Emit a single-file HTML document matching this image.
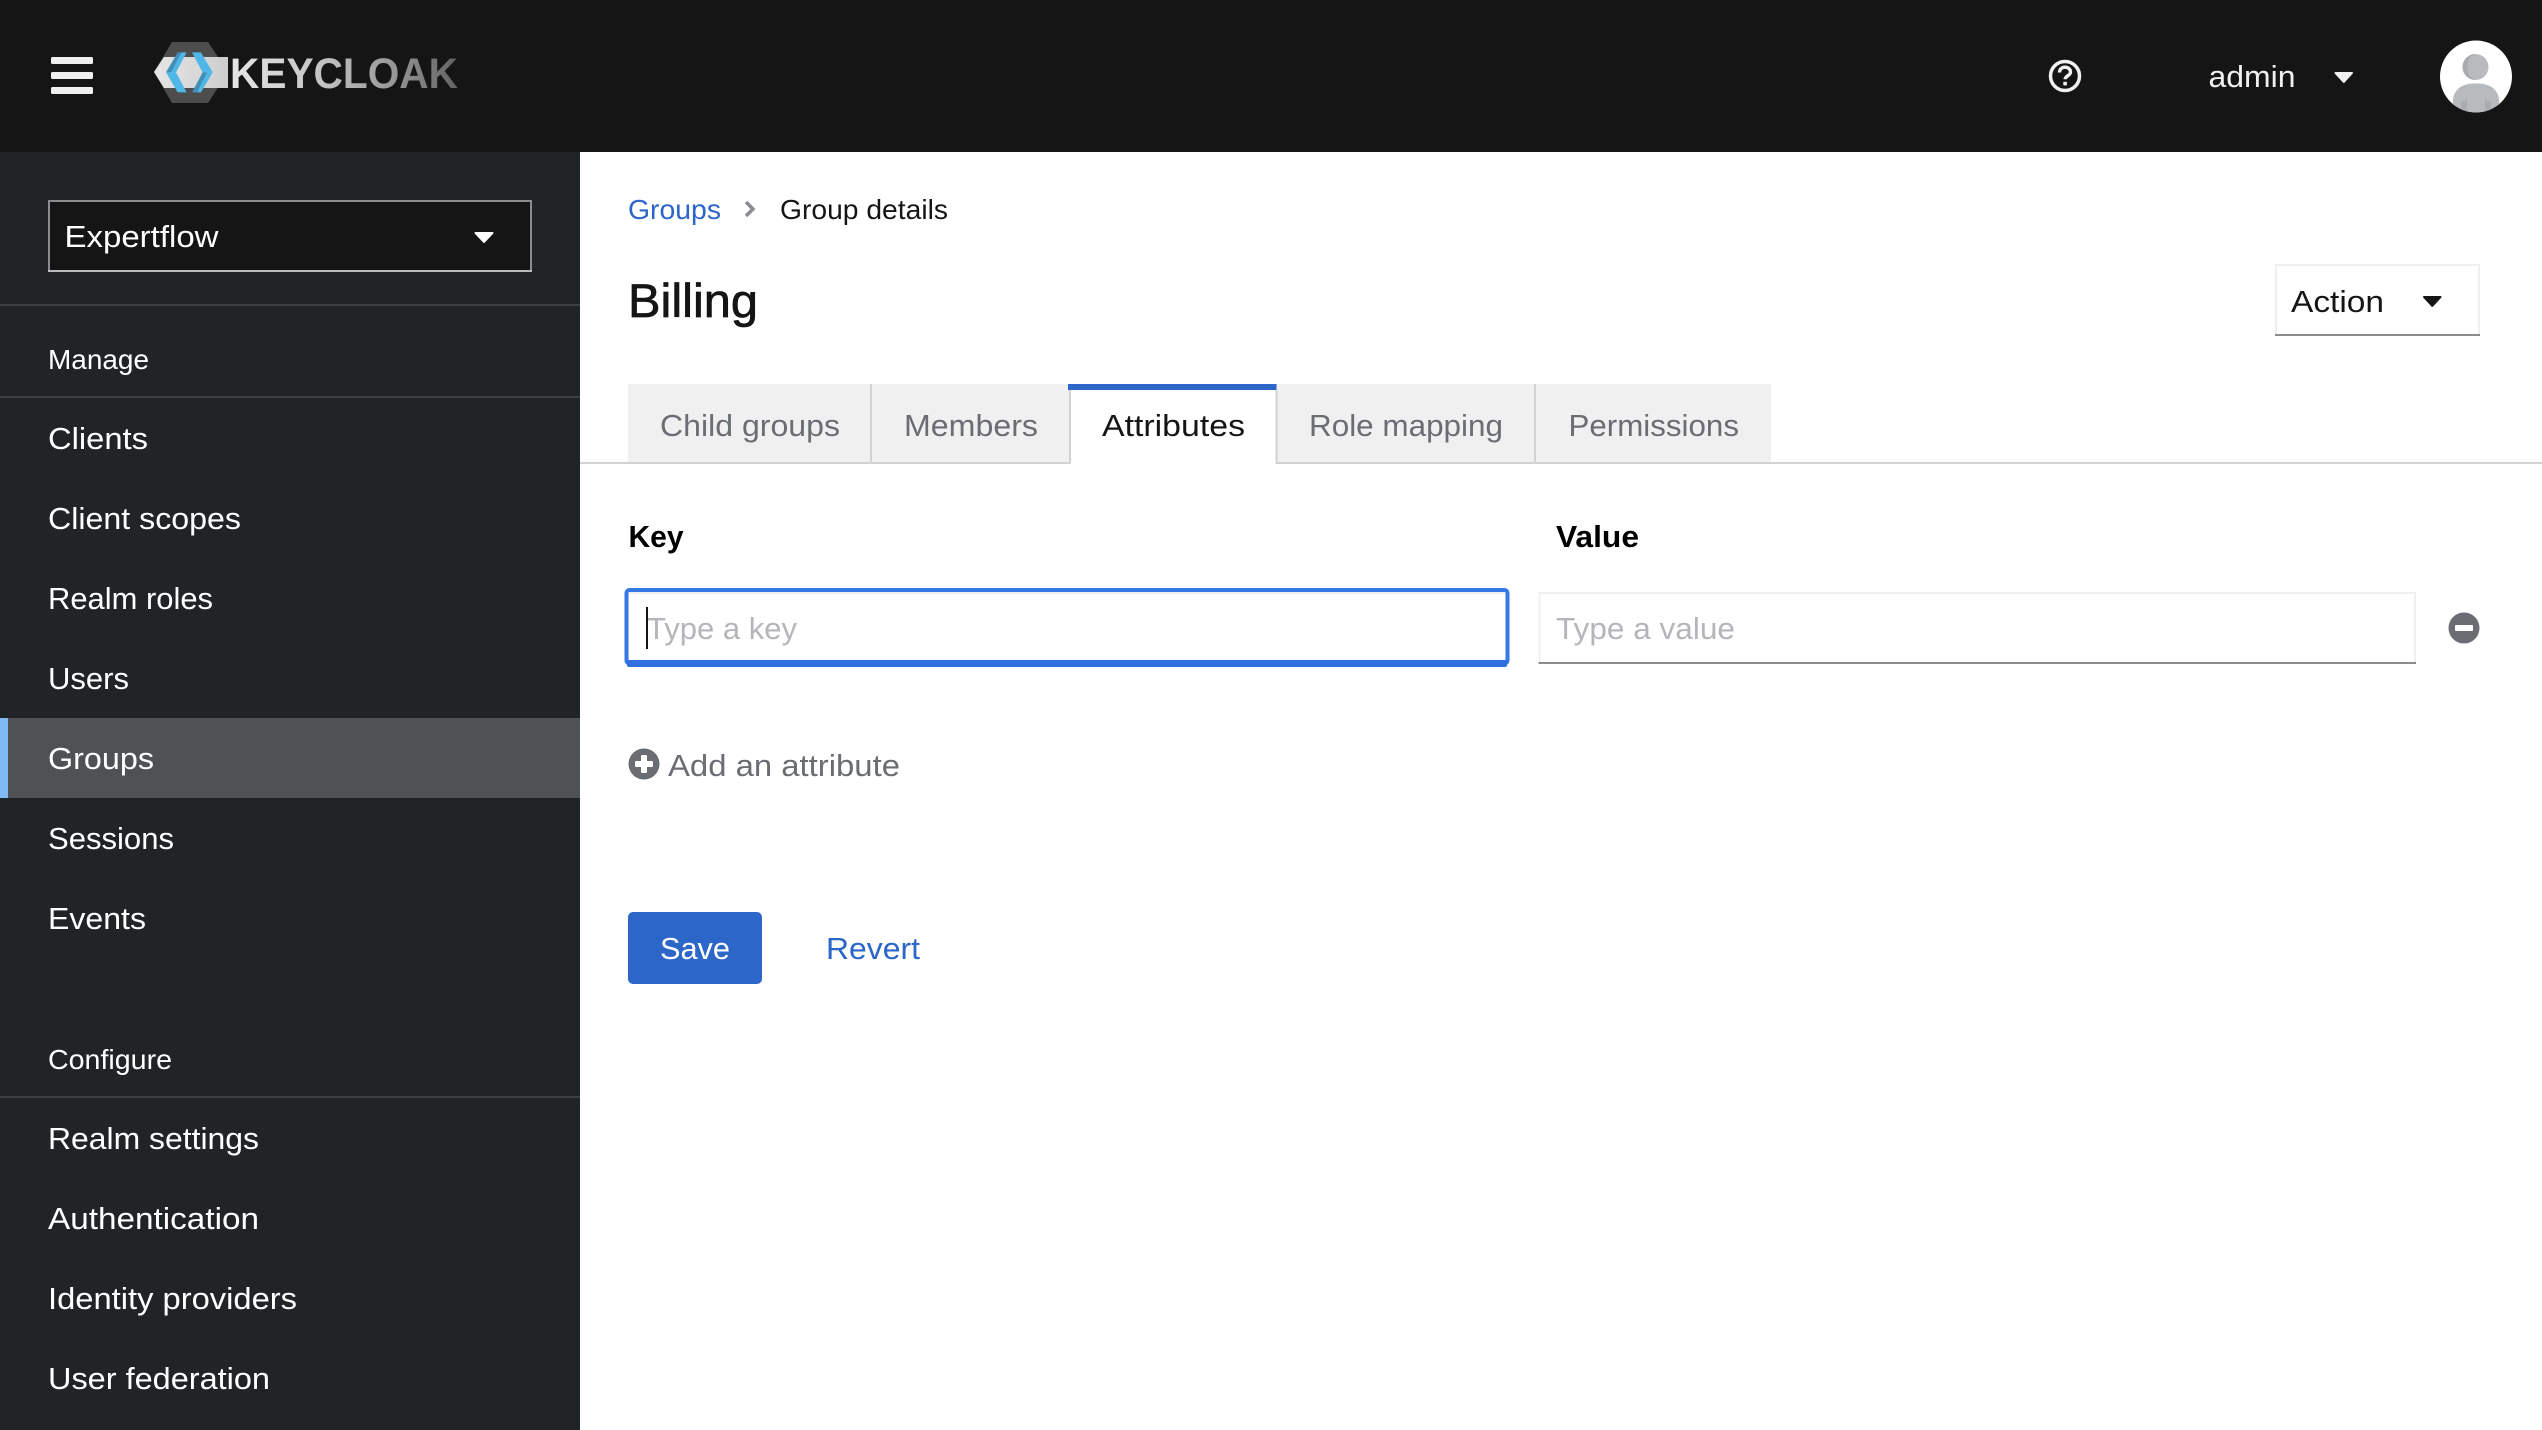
<!DOCTYPE html>
<html lang="en">
<head>
<meta charset="utf-8">
<title>Keycloak - Group details</title>
<style>
html,body{margin:0;padding:0;background:#fff;width:2542px;height:1430px;overflow:hidden}
svg{display:block}
text{font-family:"Liberation Sans",Arial,sans-serif;font-size:31px}
.nav{fill:#fff}
.gray{fill:#6a6e73}
.ph{fill:#b4b6b9}
</style>
</head>
<body>
<svg xmlns="http://www.w3.org/2000/svg" width="2542" height="1430" viewBox="0 0 2542 1430">
<defs>
<linearGradient id="kc" gradientUnits="userSpaceOnUse" x1="231" y1="0" x2="457" y2="0">
<stop offset="0" stop-color="#e6e6e6"/><stop offset=".4" stop-color="#c4c4c4"/><stop offset=".7" stop-color="#9a9a9a"/><stop offset="1" stop-color="#636363"/>
</linearGradient>
<linearGradient id="band" gradientUnits="userSpaceOnUse" x1="154" y1="0" x2="228" y2="0">
<stop offset="0" stop-color="#e6e6e6"/><stop offset="1" stop-color="#cdcdcd"/>
</linearGradient>
<clipPath id="av"><circle cx="2476" cy="76.500" r="36"/></clipPath>
</defs>

<!-- backgrounds -->
<rect width="2542" height="1430" fill="#fff"/>
<rect width="2542" height="152" fill="#151515"/>
<rect y="152" width="580" height="1278" fill="#212427"/>

<!-- hamburger -->
<rect x="51" y="57" width="42" height="7" rx="1.500" fill="#f0f0f0"/>
<rect x="51" y="72" width="42" height="7" rx="1.500" fill="#f0f0f0"/>
<rect x="51" y="87" width="42" height="7" rx="1.500" fill="#f0f0f0"/>

<!-- logo -->
<polygon points="154,72 172,42 208,42 228,72 208,103 172,103" fill="#4d4d4d"/>
<polygon points="154,72 164,57 228,57 228,88 164,88" fill="url(#band)"/>
<g transform="translate(140,30) scale(.3333)">
<polygon points="113,67 125,67 94,127 78,127" fill="#3f8fb8"/>
<polygon points="125,67 140,67 108,127 94,127" fill="#4fb6e8"/>
<polygon points="78,127 108,127 140,187 113,187" fill="#4fb6e8"/>
<polygon points="156,67 183,67 218,127 188,127" fill="#4fb6e8"/>
<polygon points="218,127 202,127 171,187 183,187" fill="#4fb6e8"/>
<polygon points="188,127 202,127 171,187 156,187" fill="#3f8fb8"/>
</g>
<text x="230" y="88" font-weight="700" style="font-size:43px" fill="url(#kc)" textLength="228" lengthAdjust="spacingAndGlyphs">KEYCLOAK</text>

<!-- help -->
<circle cx="2065" cy="76" r="14.500" fill="none" stroke="#f0f0f0" stroke-width="3.500"/>
<path d="M2059.500 72.500c0-3.200 2.400-5.300 5.500-5.300s5.500 2 5.500 4.800c0 3.800-5.300 3.800-5.300 7.200" fill="none" stroke="#f0f0f0" stroke-width="3.400"/>
<rect x="2063.300" y="81.800" width="3.600" height="3.600" fill="#f0f0f0"/>

<!-- user -->
<text x="2208.500" y="87" fill="#f0f0f0" textLength="87" lengthAdjust="spacingAndGlyphs">admin</text>
<polygon points="2335.500,73 2352,73 2343.800,82" fill="#f0f0f0" stroke="#f0f0f0" stroke-width="2" stroke-linejoin="round"/>
<circle cx="2476" cy="76.500" r="36" fill="#fff"/>
<g clip-path="url(#av)">
<ellipse cx="2475.500" cy="67" rx="13" ry="13" fill="#b8bbbe"/>
<path d="M2462.500 67a13 13 0 0 1 13-13c-5 1.500-8 6-8 13s3 11.500 8 13a13 13 0 0 1-13-13z" fill="#a9abae"/>
<path d="M2452 114l1-14c1-11 9-16 20-16.500h6c11 .5 19 5.500 20 16.500l1 14z" fill="#b8bbbe"/>
<path d="M2461 114v-9c0-3 2-5 6-6v15zM2491 114v-9c0-3-2-5-6-6v15z" fill="#a9abae"/>
</g>

<!-- realm select -->
<rect x="49" y="201" width="482" height="70" fill="#151515" stroke="#8a8d90" stroke-width="2"/>
<line x1="48" y1="271" x2="532" y2="271" stroke="#b8bbbe" stroke-width="2"/>
<text x="64.500" y="247" fill="#fff" textLength="154" lengthAdjust="spacingAndGlyphs">Expertflow</text>
<polygon points="475.500,233 492.500,233 484,242" fill="#fff" stroke="#fff" stroke-width="2" stroke-linejoin="round"/>

<!-- nav -->
<rect y="304" width="580" height="2" fill="#3c3f42"/>
<text class="nav" x="48" y="369" style="font-size:28px" textLength="101" lengthAdjust="spacingAndGlyphs">Manage</text>
<rect y="396" width="580" height="2" fill="#3c3f42"/>
<rect y="718" width="580" height="80" fill="#4f5255"/>
<rect y="718" width="8" height="80" fill="#7fb9f2"/>
<text class="nav" x="48" y="449" textLength="100" lengthAdjust="spacingAndGlyphs">Clients</text>
<text class="nav" x="48" y="529" textLength="193" lengthAdjust="spacingAndGlyphs">Client scopes</text>
<text class="nav" x="48" y="609" textLength="165" lengthAdjust="spacingAndGlyphs">Realm roles</text>
<text class="nav" x="48" y="689" textLength="81" lengthAdjust="spacingAndGlyphs">Users</text>
<text class="nav" x="48" y="769" textLength="106" lengthAdjust="spacingAndGlyphs">Groups</text>
<text class="nav" x="48" y="849" textLength="126" lengthAdjust="spacingAndGlyphs">Sessions</text>
<text class="nav" x="48" y="929" textLength="98" lengthAdjust="spacingAndGlyphs">Events</text>
<text class="nav" x="48" y="1069" style="font-size:28px" textLength="124" lengthAdjust="spacingAndGlyphs">Configure</text>
<rect y="1096" width="580" height="2" fill="#3c3f42"/>
<text class="nav" x="48" y="1149" textLength="211" lengthAdjust="spacingAndGlyphs">Realm settings</text>
<text class="nav" x="48" y="1229" textLength="211" lengthAdjust="spacingAndGlyphs">Authentication</text>
<text class="nav" x="48" y="1309" textLength="249" lengthAdjust="spacingAndGlyphs">Identity providers</text>
<text class="nav" x="48" y="1389" textLength="222" lengthAdjust="spacingAndGlyphs">User federation</text>

<!-- breadcrumb -->
<text x="628" y="219" style="font-size:28px" fill="#2b66c8" textLength="93" lengthAdjust="spacingAndGlyphs">Groups</text>
<path d="M746 202l7 7-7 7" fill="none" stroke="#8a8d90" stroke-width="3.500"/>
<text x="780" y="219" style="font-size:28px" fill="#151515" textLength="168" lengthAdjust="spacingAndGlyphs">Group details</text>

<!-- title -->
<text x="628" y="317" style="font-size:47px" fill="#151515" stroke="#151515" stroke-width=".7" textLength="130" lengthAdjust="spacingAndGlyphs">Billing</text>

<!-- action -->
<rect x="2276" y="265" width="203" height="70" fill="#fff" stroke="#f0f0f0" stroke-width="2"/>
<line x1="2275" y1="335" x2="2480" y2="335" stroke="#8a8d90" stroke-width="2"/>
<text x="2291" y="312" fill="#151515" textLength="93" lengthAdjust="spacingAndGlyphs">Action</text>
<polygon points="2424,297 2440.500,297 2432.300,306" fill="#151515" stroke="#151515" stroke-width="2" stroke-linejoin="round"/>

<!-- tabs -->
<rect x="580" y="462" width="1962" height="2" fill="#d2d2d2"/>
<rect x="628" y="384" width="1143" height="78" fill="#f0f0f0"/>
<rect x="870" y="384" width="2" height="78" fill="#d2d2d2"/>
<rect x="1534" y="384" width="2" height="78" fill="#d2d2d2"/>
<rect x="1069" y="384" width="207" height="80" fill="#fff"/>
<rect x="1069" y="390" width="2" height="74" fill="#d2d2d2"/>
<rect x="1275.500" y="390" width="2" height="74" fill="#d2d2d2"/>
<rect x="1068" y="384" width="208.500" height="6" fill="#2b66c8"/>
<text class="gray" x="660" y="436" textLength="180" lengthAdjust="spacingAndGlyphs">Child groups</text>
<text class="gray" x="904" y="436" textLength="134" lengthAdjust="spacingAndGlyphs">Members</text>
<text x="1102" y="436" fill="#151515" textLength="143" lengthAdjust="spacingAndGlyphs">Attributes</text>
<text class="gray" x="1309" y="436" textLength="194" lengthAdjust="spacingAndGlyphs">Role mapping</text>
<text class="gray" x="1568.500" y="436" textLength="170.500" lengthAdjust="spacingAndGlyphs">Permissions</text>

<!-- labels -->
<text x="628.500" y="547" font-weight="700" fill="#000" textLength="55" lengthAdjust="spacingAndGlyphs">Key</text>
<text x="1556" y="547" font-weight="700" fill="#000" textLength="83" lengthAdjust="spacingAndGlyphs">Value</text>

<!-- key input -->
<rect x="626.500" y="590" width="881" height="73.500" rx="3" fill="#fff" stroke="#3578e8" stroke-width="4"/>
<rect x="629" y="592" width="876" height="2" fill="#f0f0f0"/>
<rect x="627" y="660" width="880" height="7" rx="2" fill="#2f6fdf"/>
<text class="ph" x="647" y="639" textLength="150" lengthAdjust="spacingAndGlyphs">Type a key</text>
<rect x="646" y="607" width="2" height="42" fill="#151515"/>

<!-- value input -->
<rect x="1539.500" y="593" width="875.500" height="70" fill="#fff" stroke="#f0f0f0" stroke-width="2"/>
<line x1="1538.500" y1="663" x2="2416" y2="663" stroke="#8a8d90" stroke-width="2"/>
<text class="ph" x="1556" y="639" textLength="179" lengthAdjust="spacingAndGlyphs">Type a value</text>

<!-- remove -->
<circle cx="2464" cy="628" r="15.500" fill="#6a6e73"/>
<rect x="2455" y="625" width="18" height="6" rx="1" fill="#fff"/>

<!-- add -->
<circle cx="644" cy="764" r="15.500" fill="#6a6e73"/>
<rect x="641" y="755" width="6" height="18" rx="1" fill="#fff"/>
<rect x="635" y="761" width="18" height="6" rx="1" fill="#fff"/>
<text class="gray" x="668" y="776" textLength="232" lengthAdjust="spacingAndGlyphs">Add an attribute</text>

<!-- buttons -->
<rect x="628" y="912" width="134" height="72" rx="5" fill="#2b66c8"/>
<text x="660" y="959" fill="#fff" textLength="70" lengthAdjust="spacingAndGlyphs">Save</text>
<text x="826" y="959" fill="#2b66c8" textLength="94" lengthAdjust="spacingAndGlyphs">Revert</text>
</svg>
</body>
</html>
